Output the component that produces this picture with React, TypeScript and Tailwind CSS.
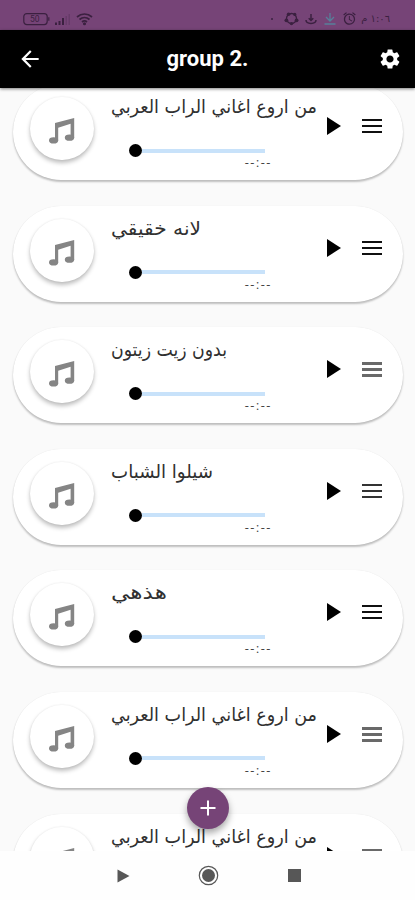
import React from 'react'
import { MdArrowBack, MdSettings, MdAlarm } from 'react-icons/md'
import clsx from 'clsx'

type Track = {
    id: number;
    title: string;
    width: string;
    menu: 'dark' | 'mid' | 'light';
    time?: string;
}

const tracks: Track[] = [
    { id: 1, title: 'من اروع اغاني الراب العربي', width: 'w-[206px]', menu: 'dark', time: '--:--' },
    { id: 2, title: 'لانه خقيقي', width: 'w-[90px]', menu: 'dark', time: '--:--' },
    { id: 3, title: 'بدون زيت زيتون', width: 'w-[116px]', menu: 'light', time: '--:--' },
    { id: 4, title: 'شيلوا الشباب', width: 'w-[102px]', menu: 'mid', time: '--:--' },
    { id: 5, title: 'هذهي', width: 'w-[56px]', menu: 'dark', time: '--:--' },
    { id: 6, title: 'من اروع اغاني الراب العربي', width: 'w-[206px]', menu: 'light', time: '--:--' },
    { id: 7, title: 'من اروع اغاني الراب العربي', width: 'w-[206px]', menu: 'light' },
]

const StatusBar = () => (
    <div className="flex h-[30px] items-start justify-between bg-[#764477] pl-[23px] pr-[25px] text-[#3b2040]">
        <div className="flex items-center pt-[11px]">
            <svg className="h-[16px] w-[27px]" viewBox="0 0 27 16" fill="none" stroke="currentColor" strokeWidth={1.2}>
                <rect x="0.8" y="2.6" width="23.4" height="11" rx="3" />
                <path d="M25.8 6.3v3.4" />
                <text x="7" y="11.2" fontSize="8.5" fill="currentColor" stroke="none" fontFamily="Roboto">50</text>
            </svg>
            <svg className="ml-[4px] h-[13px] w-[17px]" viewBox="0 0 17 13" fill="currentColor">
                <path d="M1 9.500h2V12H1zM4.500 8h2v4h-2zM8 5h2v7H8z" />
                <path d="M11.500 3h1.500v9h-1.500zM14.500 1H16v11h-1.500z" opacity="0.25" />
            </svg>
            <svg className="ml-[5px] h-[14px] w-[17px]" viewBox="0 0 17 14" fill="none" stroke="currentColor" strokeWidth={1.7}>
                <path d="M1 5c4.500-4 10.500-4 15 0M3.500 7.500c3-2.600 7-2.600 10 0M6 10c1.500-1.300 3.500-1.300 5 0" />
                <circle cx="8.500" cy="11.800" r="0.700" fill="currentColor" />
            </svg>
        </div>
        <div className="flex items-center pt-[11px]">
            <span className="mr-[11px] h-[2px] w-[2px] rounded-full bg-current" />
            <svg className="h-[15px] w-[15px]" viewBox="0 0 15 15" fill="none" stroke="currentColor" strokeWidth={1.3}>
                <circle cx="7.500" cy="7.500" r="5" />
                <g fill="currentColor" stroke="none">
                    <circle cx="4.600" cy="3.200" r="1.800" />
                    <circle cx="10.800" cy="3.400" r="1.600" />
                    <circle cx="2.400" cy="9.300" r="1.900" />
                    <circle cx="12.600" cy="9.300" r="1.900" />
                    <circle cx="7.500" cy="12.600" r="1.700" />
                </g>
            </svg>
            <svg className="ml-[6px] h-[12px] w-[12px]" viewBox="0 0 12 12" fill="none" stroke="currentColor" strokeWidth={1.5}>
                <path d="M6 1v6.500M3.700 5.200 6 7.500l2.300-2.300M1 7c0 4.500 10 4.500 10 0" />
            </svg>
            <svg className="ml-[7px] h-[13px] w-[12px] text-[#587f9a]" viewBox="0 0 12 13" fill="none" stroke="currentColor" strokeWidth={1.3}>
                <path d="M6 1v8M2 5l4 4 4-4M0.500 12h11" />
            </svg>
            <MdAlarm className="ml-[6px] h-[15px] w-[15px]" />
            <span className="ml-[5px] w-[28px] whitespace-nowrap text-[10px] leading-[14px] font-['DejaVu_Sans',sans-serif]" dir="rtl">١:٠٦ م</span>
        </div>
    </div>
)

const AppBar = () => (
    <div className="z-10 grid h-[58px] grid-cols-[1fr_auto_1fr] items-center bg-black pl-[17px] pr-[13px] text-white shadow-[0_1px_3px_rgba(0,0,0,0.5)]">
        <button type="button"><MdArrowBack className="h-[26px] w-[26px]" /></button>
        <h1 className="mr-[4px] text-[22px] font-bold leading-7 font-['Roboto',sans-serif]">group 2.</h1>
        <button type="button" className="justify-self-end"><MdSettings className="h-[24px] w-[24px]" /></button>
    </div>
)

const MusicNote = () => (
    <svg className="h-[26px] w-[26px] text-[#858585]" viewBox="0 0 26 26" fill="currentColor">
        <path d="M6 5 25.200 0v19.700H21.600V5.800L9.200 9.800v12.500H6z" />
        <ellipse cx="20.500" cy="19.700" rx="4.700" ry="3.100" />
        <ellipse cx="4.600" cy="22.400" rx="4.600" ry="3.100" />
    </svg>
)

const MenuLines = ({ tone }: { tone: Track['menu'] }) => (
    <div
        className={clsx(
            'flex w-[20px] flex-col justify-between',
            tone === 'dark' && 'h-[14px] text-[#101010]',
            tone === 'mid' && 'h-[14px] text-[#333]',
            tone === 'light' && 'h-[15px] text-[#696969]',
        )}
    >
        {[0, 1, 2].map((n) => (
            <span key={n} className={clsx('w-full bg-current', tone === 'light' ? 'h-[3px]' : 'h-[2px]')} />
        ))}
    </div>
)

const TrackCard = ({ track }: { track: Track }) => (
    <div className="flex h-[96px] shrink-0 rounded-[48px] bg-white pl-[17px] pr-[22px] shadow-[0_2px_2px_rgba(0,0,0,0.24),0_0_1px_rgba(0,0,0,0.1)]">
        <div className="mt-[13px] flex h-[63px] w-[64px] shrink-0 items-center justify-center rounded-full bg-white pt-[5px] shadow-[0_3px_4px_rgba(0,0,0,0.25),0_0_2px_rgba(0,0,0,0.08)]">
            <MusicNote />
        </div>
        <div className="ml-[17px] w-[206px] shrink-0">
            <div className="mt-[5px] h-[34px]">
                <svg className={clsx('h-[34px] overflow-visible', track.width)} direction="rtl">
                    <text
                        x="100%"
                        y="23.500"
                        textLength="100%"
                        lengthAdjust="spacingAndGlyphs"
                        className="fill-[#303030] text-[19px] font-['DejaVu_Sans',sans-serif]"
                    >
                        {track.title}
                    </text>
                </svg>
            </div>
            <div className="ml-[18px] mt-[21px] flex h-[13px] items-center">
                <span className="h-[13px] w-[13px] rounded-full bg-black" />
                <span className="h-[4px] w-[123px] bg-[#c8e2fa]" />
            </div>
            {track.time && (
                <div className="ml-[134px] whitespace-nowrap text-[13px] leading-[12px] tracking-[1.9px] text-[#444] font-['Roboto',sans-serif]">
                    {track.time}
                </div>
            )}
        </div>
        <svg className="ml-[10px] mt-[33px] h-[18px] w-[14px] shrink-0" viewBox="0 0 14 18">
            <path d="M0 0v18L14 9z" />
        </svg>
        <div className="ml-[21px] mt-[35px]">
            <MenuLines tone={track.menu} />
        </div>
    </div>
)

const NavBar = () => (
    <div className="z-10 flex h-[49px] items-center bg-[#fefefe] pl-[117px] text-[#575757]">
        <svg className="h-[14px] w-[13px]" viewBox="0 0 13 14" fill="currentColor">
            <path d="M0.500 0.500v13L12.500 7z" />
        </svg>
        <svg className="ml-[68px] h-[21px] w-[21px]" viewBox="0 0 21 21">
            <circle cx="10.500" cy="10.500" r="9.200" fill="none" stroke="currentColor" strokeWidth={1.2} />
            <circle cx="10.500" cy="10.500" r="6.500" fill="currentColor" />
        </svg>
        <span className="ml-[69px] h-[13px] w-[13px] bg-current" />
    </div>
)

const App = () => {
    return (
        <div className="relative flex h-[900px] w-[415px] flex-col overflow-hidden bg-[#fafafa]">
            <StatusBar />
            <AppBar />
            <div className="h-[763px] overflow-hidden">
                <div className="-mt-[4px] flex flex-col gap-[25.6px] pl-[13px] pr-[12px]">
                    {tracks.map((track) => <TrackCard key={track.id} track={track} />)}
                </div>
            </div>
            <NavBar />
            <button
                type="button"
                className="absolute left-[187px] top-[787px] z-20 flex h-[42px] w-[42px] items-center justify-center rounded-full bg-[#764477] shadow-[0_4px_7px_rgba(0,0,0,0.35)]"
            >
                <svg className="h-[16px] w-[16px]" viewBox="0 0 16 16" stroke="white" strokeWidth={2}>
                    <path d="M8 0.500v15M0.500 8h15" />
                </svg>
            </button>
        </div>
    )
}

export default App
